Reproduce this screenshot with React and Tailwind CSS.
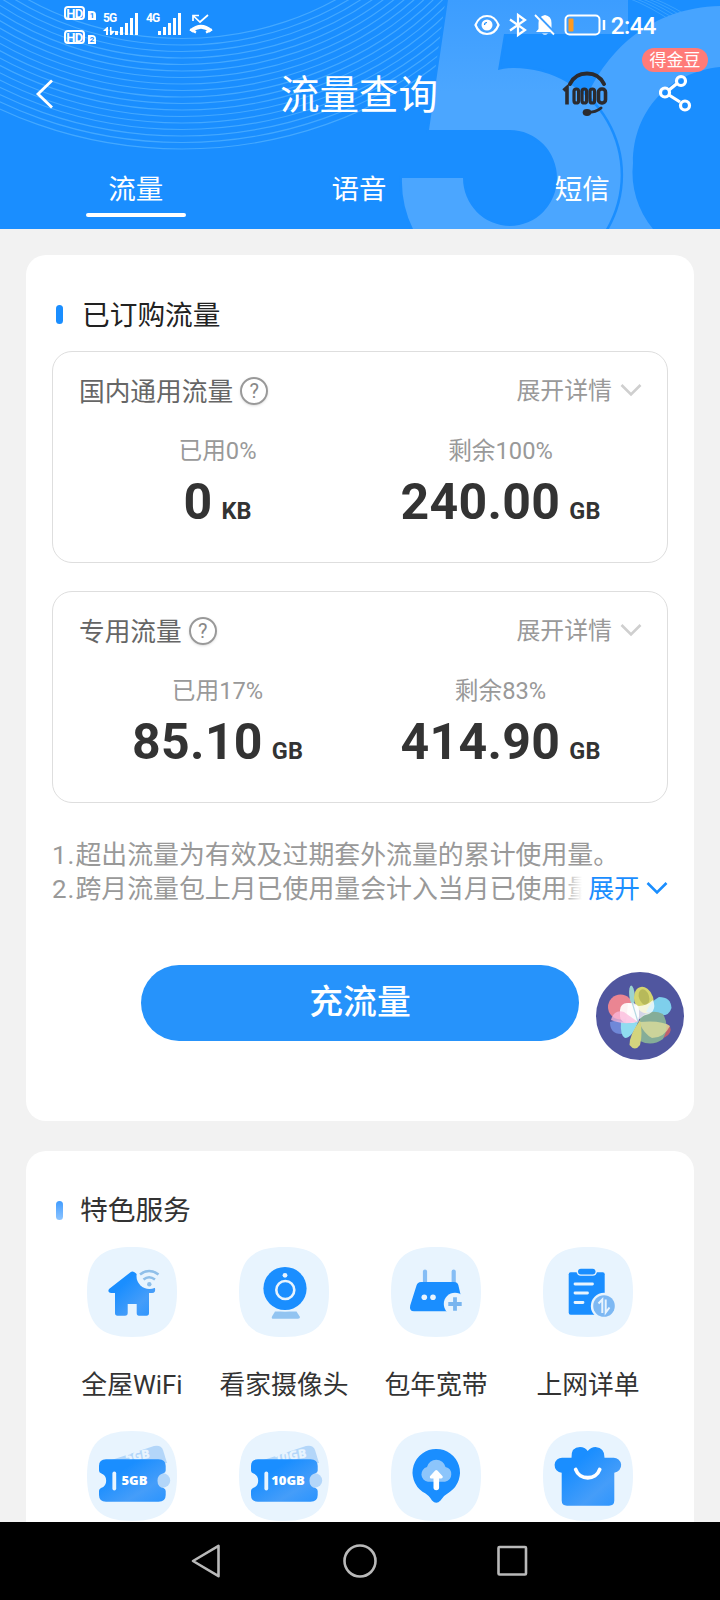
import React from "react";

const tabs = ["流量", "语音", "短信"];

const packages = [
    {
        name: "国内通用流量",
        stats: [
            { label: "已用0%", value: "0", unit: "KB" },
            { label: "剩余100%", value: "240.00", unit: "GB" },
        ],
    },
    {
        name: "专用流量",
        stats: [
            { label: "已用17%", value: "85.10", unit: "GB" },
            { label: "剩余83%", value: "414.90", unit: "GB" },
        ],
    },
];

const waves = Array.from({ length: 18 }, (_, i) => ({ rx: 392 - i * 6.5, ry: 350 - i * 6.5 }));

function HeaderArt() {
    return (
        <svg className="absolute inset-0" width="720" height="229" viewBox="0 0 720 229" fill="none">
            <defs>
                <linearGradient id="five" x1="0" y1="0" x2="0" y2="1">
                    <stop offset="0" stopColor="#3c9dff" />
                    <stop offset="0.4" stopColor="#4ba6ff" />
                    <stop offset="1" stopColor="#4ba6ff" />
                </linearGradient>
            </defs>
            {waves.map(({ rx, ry }) => (
                <ellipse key={rx} cx="182" cy="-201" rx={rx} ry={ry} stroke="#55b3ff" strokeOpacity="0.7" strokeWidth="1.200" />
            ))}
            {[0, 6, 12, 18, 24].map((d) => (
                <path key={d} d={`M${628 + d} -2 Q${650 + d} 6 ${676 + d} 24`} stroke="#55b3ff" strokeOpacity="0.5" />
            ))}
            <path
                d="M720 6C650 8 610 50 590 90V229H653A88 88 0 0 1 633 163C633 110 670 72 720 67Z"
                fill="#47a4ff"
            />
            <path
                d="M448 0H628V34H504L498 70Q505 68 513 68A107 107 0 0 1 606 229H413A107 107 0 0 1 402 178H463A47 48 0 1 0 510 130H429Z"
                fill="url(#five)"
                stroke="#1a8eff"
                strokeWidth="5"
                paintOrder="stroke"
            />
        </svg>
    );
}

function SignalBars() {
    return (
        <svg width="24" height="23" viewBox="0 0 24 23" fill="#fff">
            <rect x="0" y="18" width="3" height="4" />
            <rect x="5" y="14" width="3" height="8" />
            <rect x="10" y="10" width="3" height="12" />
            <rect x="15" y="5" width="3" height="17" />
            <rect x="20" y="0" width="3" height="22" />
        </svg>
    );
}

function HdBadge({ sim }) {
    return (
        <div className="flex items-end gap-[3px]">
            <span className="flex h-[14px] w-[21px] items-center justify-center rounded-[4px] border-2 border-white text-[13px] leading-none font-bold tracking-[-0.5px]">
                HD
            </span>
            <span className="flex h-[9px] w-[8px] items-center justify-center rounded-tr-[4px] bg-white text-[8px] leading-none font-bold text-[#1a8eff]">
                {sim}
            </span>
        </div>
    );
}

function StatusBar() {
    return (
        <div className="flex h-12 items-start justify-between pr-[64px] pl-16">
            <div className="flex items-start">
                <div className="flex flex-col gap-[10px] pt-[6px]">
                    <HdBadge sim="1" />
                    <HdBadge sim="2" />
                </div>
                <div className="ml-[7px] flex w-[12px] flex-col pt-[12px]">
                    <span className="text-[12px] leading-[12px] font-bold tracking-[-1px]">5G</span>
                    <svg className="mt-[3px]" width="12" height="8" viewBox="0 0 12 8" fill="#fff">
                        <path d="M0 4L4 0H5V8H3V4ZM7 0H8.500V4H12L8.500 8H7Z" />
                    </svg>
                </div>
                <div className="pt-[13px]">
                    <SignalBars />
                </div>
                <span className="ml-[7px] w-[12px] pt-[12px] text-[12px] leading-[12px] font-bold tracking-[-1px]">4G</span>
                <div className="pt-[13px]">
                    <SignalBars />
                </div>
                <svg className="mt-[14px] ml-[7px]" width="24" height="20" viewBox="0 0 24 20" fill="none" stroke="#fff">
                    <path d="M4 7V1.500H10M4.500 2L11 8L19 1" strokeWidth="1.700" />
                    <path d="M2 17Q12 8.500 22 17" strokeWidth="4" />
                    <path d="M1 15.500L7 18.500M17 18.500L23 15.500" strokeWidth="2.500" />
                </svg>
            </div>
            <div className="flex items-center pt-[10px]">
                <svg width="26" height="28" viewBox="0 0 26 28" fill="none">
                    <path d="M1.500 14Q5 5 13 5T24.500 14Q21 23 13 23T1.500 14Z" stroke="#fff" strokeWidth="2.200" />
                    <circle cx="13" cy="14" r="5.500" fill="#fff" />
                    <path d="M13 11.500A2.500 2.500 0 0 0 10.500 14" stroke="#1a8eff" strokeWidth="1.200" />
                </svg>
                <svg className="ml-[8px]" width="20" height="28" viewBox="0 0 20 28" fill="none" stroke="#fff" strokeWidth="2.200">
                    <path d="M2 8.500L17 19L10 24V4L17 9L2 19.500" />
                </svg>
                <svg className="ml-[6px]" width="22" height="28" viewBox="0 0 22 28" fill="none">
                    <path d="M11 4Q17.500 5 17.500 12V18L20 21H2L4.500 18V12Q4.500 5 11 4Z" fill="#fff" />
                    <path d="M8 22.500H14Q11 25 8 22.500Z" fill="#fff" />
                    <path d="M2.500 3.500L21 22.500" stroke="#3b9dff" strokeWidth="3" />
                    <path d="M1 4L20 23.500" stroke="#fff" strokeWidth="1.800" />
                </svg>
                <svg className="ml-[8px]" width="42" height="28" viewBox="0 0 42 28" fill="none">
                    <rect x="1.500" y="4.500" width="34" height="19" rx="4" stroke="#fff" strokeWidth="2" />
                    <rect x="4.500" y="7.500" width="5" height="13" rx="1" fill="#ff9a1f" />
                    <path d="M40 9V19" stroke="#fff" strokeWidth="2.500" />
                </svg>
                <span className="ml-[5px] pt-[2px] text-[24px] leading-[28px] font-medium tracking-[-0.5px]">2:44</span>
            </div>
        </div>
    );
}

function TitleBar() {
    return (
        <div className="flex h-[96px] items-center">
            <div className="-mt-1 flex w-[239px] pl-[35px]">
                <svg width="20" height="30" viewBox="0 0 20 30" fill="none">
                    <path d="M17 1.500L3 15L17 28.500" stroke="#fff" strokeWidth="2.800" />
                </svg>
            </div>
            <h1 className="w-[240px] text-center text-[39.500px] leading-[48px]">流量查询</h1>
            <div className="-mt-[6px] flex w-[241px] items-center">
                <svg className="ml-[82px]" width="50" height="48" viewBox="0 0 50 48" fill="none" stroke="#2b2b2f">
                    <path d="M9 15Q14 4.500 26 4.500T43 15" strokeWidth="4" strokeLinecap="round" />
                    <path d="M2.500 21.500L6 18.500V35.500" strokeWidth="3.600" />
                    <rect x="13" y="20" width="4.600" height="14" rx="2.300" strokeWidth="3.200" />
                    <rect x="21" y="20" width="4.600" height="14" rx="2.300" strokeWidth="3.200" />
                    <rect x="29" y="20" width="4.600" height="14" rx="2.300" strokeWidth="3.200" />
                    <rect x="37.500" y="20" width="7" height="14" rx="3.200" strokeWidth="3.600" />
                    <path d="M26 43.500Q35 43.500 40 39" strokeWidth="3" strokeLinecap="round" />
                    <ellipse cx="26" cy="43.500" rx="4.300" ry="3.400" fill="#2b2b2f" stroke="none" />
                </svg>
                <div className="relative ml-[48px]">
                    <svg width="34" height="38" viewBox="0 0 34 38" fill="none" stroke="#fff" strokeWidth="3.200">
                        <path d="M10 16L18 9.500M10 21L21 28" />
                        <circle cx="6" cy="18.500" r="4.500" />
                        <circle cx="22" cy="7" r="4.500" />
                        <circle cx="26" cy="31.500" r="4.500" />
                    </svg>
                    <span className="absolute -top-[26px] -left-[17px] h-[24px] w-[66px] rounded-full bg-[#ff7b78] text-center text-[17px] leading-[24px]">
                        得金豆
                    </span>
                </div>
            </div>
        </div>
    );
}

function Tabs() {
    return (
        <div className="flex pt-[28px] pr-[26px] pl-[24px]">
            {tabs.map((tab, i) => (
                <div key={tab} className="flex flex-1 flex-col items-center">
                    <span className="text-[27.500px] leading-[36px]">{tab}</span>
                    {i === 0 && <span className="mt-[5px] h-1 w-[100px] rounded-full bg-white" />}
                </div>
            ))}
        </div>
    );
}

function Chevron({ className }) {
    return (
        <svg className={className} width="22" height="14" viewBox="0 0 22 14" fill="none" stroke="currentColor" strokeWidth="2.600">
            <path d="M1.500 2L11 11.500L20.500 2" />
        </svg>
    );
}

function PackageCard({ name, stats }) {
    return (
        <div className="h-[212px] rounded-[20px] border border-[#dedede] px-[25px] pt-[22px]">
            <div className="flex h-9 items-center">
                <span className="pl-px text-[25.700px] text-[#666]">{name}</span>
                <span className="mb-[2px] ml-[7px] flex h-7 w-7 items-center justify-center rounded-full border-2 border-[#999] text-[20px] leading-none text-[#888] shadow-sm">
                    ?
                </span>
                <span className="ml-auto text-[23.900px] text-[#999]">展开详情</span>
                <Chevron className="mb-[5px] ml-[8px] text-[#cfcfcf]" />
            </div>
            <div className="mt-[23px] -ml-[2px] flex">
                {stats.map((s) => (
                    <div key={s.label} className="flex w-1/2 flex-col items-center">
                        <span className="text-[23.700px] leading-[36px] text-[#999]">{s.label}</span>
                        <div className="mt-[3px] flex items-baseline font-bold text-[#333]">
                            <span className="text-[50px] leading-[60px] tracking-[0.3px]">{s.value}</span>
                            <span className="ml-[9px] text-[23.500px]">{s.unit}</span>
                        </div>
                    </div>
                ))}
            </div>
        </div>
    );
}

function Heading({ children, soft }) {
    return (
        <div className="flex h-10 items-center gap-[17px] pl-1">
            <span className={soft ? "h-[19px] w-[7px] rounded-full bg-linear-to-b from-[#3f9cff] to-[#8cc4ff]" : "mb-[2px] h-[19px] w-[7px] rounded-full bg-[#1a8eff]"} />
            <h2 className={soft ? "pt-px text-[27.700px] text-[#333]" : "pt-[2px] pl-[2px] text-[27.700px] text-[#222]"}>{children}</h2>
        </div>
    );
}

function Assistant() {
    return (
        <svg className="absolute top-[7px] left-[544px]" width="88" height="88" viewBox="0 0 88 88">
            <circle cx="44" cy="44" r="44" fill="#50569f" />
            <circle cx="24.500" cy="35" r="12.500" fill="#ea8592" />
            <path d="M14 50Q24 46 34 52Q32 62 25 62Q14 62 14 50Z" fill="#6f88d8" />
            <path d="M25 50H42Q36 66 29 66Q24 64 25 50Z" fill="#8fdcf0" />
            <ellipse cx="36" cy="23" rx="2.800" ry="9.500" fill="#9bd3cf" transform="rotate(-5 36 23)" />
            <ellipse cx="48" cy="28" rx="9.500" ry="13.500" fill="#d5d56e" transform="rotate(-18 48 28)" />
            <ellipse cx="48" cy="25" rx="5" ry="8" fill="#b7b95a" transform="rotate(-18 48 25)" />
            <path d="M50 40Q54 30 63 25Q75 25 75.500 36Q73 45 62 43Z" fill="#7ecfec" />
            <ellipse cx="66" cy="59" rx="9" ry="7" fill="#c0606c" transform="rotate(-25 66 59)" />
            <path d="M44 46Q54 36 67 42Q74 54 67 67Q56 75 44 69Z" fill="#85ad98" />
            <path d="M43 50Q66 48 74 54Q68 66 56 66Q48 62 43 50Z" fill="#dcdc9b" opacity="0.8" />
            <path d="M44 48Q47 62 44 73Q39 80 33.500 73Q33 64 44 48Z" fill="#d3d47e" />
            <rect x="24" y="31" width="19" height="20" rx="7" fill="#fff" opacity="0.9" />
            <path d="M32 31Q46 38 57 28Q61 38 53 42Q44 44 42 50H30Z" fill="#fff" opacity="0.75" />
            <path d="M15 48Q18 37 28 40L42 50Q26 53 15 48Z" fill="#fbb9dc" opacity="0.75" />
            <path d="M36 30L42 50" stroke="#b5d8e2" strokeWidth="1.200" />
        </svg>
    );
}

const squircle = "M0 45C0 13 13 0 45 0S90 13 90 45S77 90 45 90S0 77 0 45Z";

function Tile({ children }) {
    return (
        <svg width="90" height="90" viewBox="0 0 90 90" fill="none">
            <path d={squircle} fill="#e8f4fe" />
            {children}
        </svg>
    );
}

function HouseIcon() {
    return (
        <Tile>
            <path
                d="M43.500 25.200Q45.300 23.800 47.500 25.200L68 41Q69 46 65 46H62V66Q62 68.700 59.500 68.700H52Q49.700 68.700 49.700 66V57H40.700V66Q40.700 68.700 38 68.700H30.500Q28 68.700 28 66V46H24Q20 45 22 42Z"
                fill="url(#blue)"
            />
            <circle cx="62.500" cy="29" r="13" fill="#e8f4fe" />
            <g stroke="#8fbfe9" strokeWidth="2.600">
                <path d="M53 27.500Q62 20.500 71.500 27.500" />
                <path d="M56.500 32.500Q62 28 68 32.500" />
            </g>
            <circle cx="62.300" cy="37.300" r="2.200" fill="#8fbfe9" />
        </Tile>
    );
}

function CameraIcon() {
    return (
        <Tile>
            <path d="M36 64.500H57.500L61 70Q61 71.800 59 71.800H34.500Q32 71.800 33 69.500Z" fill="#92c4f1" />
            <circle cx="46" cy="41.500" r="23" fill="#e8f4fe" />
            <circle cx="46" cy="41.500" r="21.600" fill="#1a8eff" />
            <circle cx="46.300" cy="43" r="9" stroke="#e8f4fe" strokeWidth="2.600" />
            <circle cx="46" cy="28.300" r="2.400" fill="#e8f4fe" />
        </Tile>
    );
}

function RouterIcon() {
    return (
        <Tile>
            <path d="M34 24.500V36M62.700 24.500V36" stroke="#85bdf5" strokeWidth="4.200" strokeLinecap="round" />
            <path
                d="M30 35H63Q66.500 35 67.300 38L72 58Q73 64.300 67 64.300H23Q18 64.300 19.200 58.500L25.500 38.500Q26.500 35 30 35Z"
                fill="#1a8eff"
            />
            <circle cx="33.300" cy="50.300" r="2.800" fill="#e8f4fe" />
            <circle cx="42" cy="50.300" r="2.800" fill="#e8f4fe" />
            <circle cx="64" cy="57" r="11.200" fill="#e8f4fe" />
            <path d="M64 50.300V63.700M57.300 57H70.700" stroke="#79b5ef" strokeWidth="3.800" />
        </Tile>
    );
}

function BillIcon() {
    return (
        <Tile>
            <rect x="25.700" y="25.300" width="36" height="42.500" rx="2" fill="#1a8eff" />
            <rect x="33.500" y="20.200" width="20.500" height="8.500" rx="4.200" fill="#e8f4fe" />
            <rect x="35" y="21.700" width="17.500" height="5.800" rx="2.900" fill="#1a8eff" />
            <path d="M32 37H49.500M32 46H44.500M32 55.500H40" stroke="#e8f4fe" strokeWidth="2.800" strokeLinecap="round" />
            <circle cx="61" cy="59" r="13.200" fill="#e8f4fe" />
            <circle cx="61" cy="59" r="10.800" fill="#7db8f3" />
            <path d="M55.500 56.500L59.300 52.500V66M62.700 52.500V65.500L66.500 60.500" stroke="#e8f4fe" strokeWidth="2" />
        </Tile>
    );
}

const ticket =
    "M19 28.300H71.500Q78.700 28.300 78.700 35V39.500Q78.700 41.500 76.500 42.300A7.500 7.500 0 0 0 76.500 57Q78.700 58 78.700 60V64Q78.700 70.700 71.500 70.700H19Q12 70.700 12 64V60Q12 58 14 57A7.800 7.800 0 0 0 14 42.300Q12 41.500 12 39.500V35Q12 28.300 19 28.300Z";

function TicketIcon({ size, textX, stubX }) {
    return (
        <Tile>
            <path d="M23 29.500L67 15Q74 13.500 76 19L80 32H23Z" fill="#b3d6f9" />
            <text
                transform={`translate(${stubX} 29) rotate(-9)`}
                fontSize="12.500"
                fontWeight="800"
                fill="#e8f4fe"
                fontFamily="Open Sans, sans-serif"
                textAnchor="middle"
            >
                {size}
            </text>
            <circle cx="76" cy="49.500" r="7.200" fill="#b3d6f9" />
            <path d={ticket} fill="url(#blue)" />
            <path d="M27.300 42.500V57.500" stroke="#e8f4fe" strokeWidth="3.800" strokeLinecap="round" />
            <text x={textX} y="54.300" fontSize="13" fontWeight="800" fill="#fff" fontFamily="Open Sans, sans-serif" textAnchor="middle">
                {size}
            </text>
        </Tile>
    );
}

function CloudPinIcon() {
    return (
        <Tile>
            <path
                d="M45.300 18A23.500 23.500 0 0 1 59 60.700Q53 64 49.500 69.500Q45.300 74 41 69.500Q38 64 31.500 60.700A23.500 23.500 0 0 1 45.300 18Z"
                fill="#1a8eff"
            />
            <path d="M37 50.700A7.500 7.500 0 0 1 36 36A9.500 9.500 0 0 1 54.500 36A7.500 7.500 0 0 1 54 50.700Z" fill="#8cc5fb" />
            <path d="M45.300 40.500L50.300 46H40.300Z" fill="#fff" stroke="#fff" strokeWidth="3" strokeLinejoin="round" />
            <path d="M45.300 44V56.500" stroke="#fff" strokeWidth="5.600" strokeLinecap="round" />
        </Tile>
    );
}

function GiftIcon() {
    return (
        <Tile>
            <path
                d="M19.500 26.700H28.500Q28 16 37 16Q42 16 44.700 20Q48 16 52.500 16Q62 17 61.500 26.700H70A7.300 7.300 0 0 1 71.300 41.700V69.500Q71.300 74.700 66 74.700H24Q18.700 74.700 18.700 69.500V41.700A7.500 7.500 0 0 1 19.500 26.700Z"
                fill="url(#blue)"
            />
            <path d="M32.700 38.500C36.500 49.500 53 49.500 56.700 38.500" stroke="#fff" strokeWidth="3.800" strokeLinecap="round" />
        </Tile>
    );
}

const services = [
    { icon: <HouseIcon />, name: "全屋WiFi" },
    { icon: <CameraIcon />, name: "看家摄像头" },
    { icon: <RouterIcon />, name: "包年宽带" },
    { icon: <BillIcon />, name: "上网详单" },
    { icon: <TicketIcon size="5GB" textX="47.500" stubX="51" /> },
    { icon: <TicketIcon size="10GB" textX="49" stubX="52" /> },
    { icon: <CloudPinIcon /> },
    { icon: <GiftIcon /> },
];

function NavBar() {
    return (
        <nav className="flex h-[78px] shrink-0 items-center bg-black pl-[190px]">
            <svg width="340" height="36" viewBox="0 0 340 36" fill="none" stroke="#b9b9b9" strokeWidth="2.600" strokeLinejoin="round">
                <path d="M3 18L28.500 2.800V33.200Z" />
                <circle cx="170" cy="18" r="15.500" />
                <rect x="308.500" y="4" width="27.500" height="27.500" rx="1" />
            </svg>
        </nav>
    );
}

export default function App() {
    return (
        <div className="flex h-[1600px] w-[720px] flex-col overflow-hidden bg-[#f2f2f2] font-[Roboto,'Noto_Sans_CJK_SC',sans-serif]">
            <svg className="absolute" width="0" height="0">
                <linearGradient id="blue" x1="0" y1="0" x2="1" y2="1">
                    <stop offset="0.3" stopColor="#1a8eff" />
                    <stop offset="0.7" stopColor="#459df9" />
                    <stop offset="1" stopColor="#2a94ff" />
                </linearGradient>
            </svg>
            <header className="relative h-[229px] shrink-0 bg-[#1a8eff] text-white">
                <HeaderArt />
                <div className="relative">
                    <StatusBar />
                    <TitleBar />
                    <Tabs />
                </div>
            </header>
            <main className="flex min-h-0 flex-1 flex-col gap-[30px] overflow-hidden px-[26px] pt-[26px]">
                <section className="h-[866px] shrink-0 rounded-[20px] bg-white px-[26px] pt-[40px]">
                    <Heading>已订购流量</Heading>
                    <div className="mt-[16px] flex flex-col gap-[28px]">
                        {packages.map((p) => (
                            <PackageCard key={p.name} {...p} />
                        ))}
                    </div>
                    <div className="relative mt-[35px] text-[25.900px] leading-[34px] whitespace-nowrap text-[#999]">
                        <p>
                            <span className="tracking-[1px]">1.</span>超出流量为有效及过期套外流量的累计使用量。
                        </p>
                        <p>
                            <span className="tracking-[1px]">2.</span>跨月流量包上月已使用量会计入当月已使用量
                        </p>
                        {/* fades out the end of the last line */}
                        <span className="absolute right-0 bottom-0 flex items-center bg-linear-to-r from-transparent to-white to-[20px] pl-[26px] text-[#1a8eff]">
                            展开
                            <Chevron className="mb-[2px] ml-[6px]" />
                        </span>
                    </div>
                    <div className="relative mt-[59px] pl-[89px]">
                        <button className="h-[76px] w-[438px] rounded-full bg-[#2693fb] pt-px text-[33.800px] font-medium text-white">充流量</button>
                        <Assistant />
                    </div>
                </section>
                <section className="h-[500px] shrink-0 rounded-[20px] bg-white px-[26px] pt-[39px]">
                    <Heading soft>特色服务</Heading>
                    <div className="mt-[17px] grid grid-cols-[repeat(4,152px)] gap-y-[28px] pl-[4px]">
                        {services.map((s, i) => (
                            <div key={i} className="flex flex-col items-center">
                                {s.icon}
                                <span className="mt-[30px] h-9 text-[25.800px] leading-[36px] whitespace-nowrap text-[#333]">{s.name}</span>
                            </div>
                        ))}
                    </div>
                </section>
            </main>
            <NavBar />
        </div>
    );
}
